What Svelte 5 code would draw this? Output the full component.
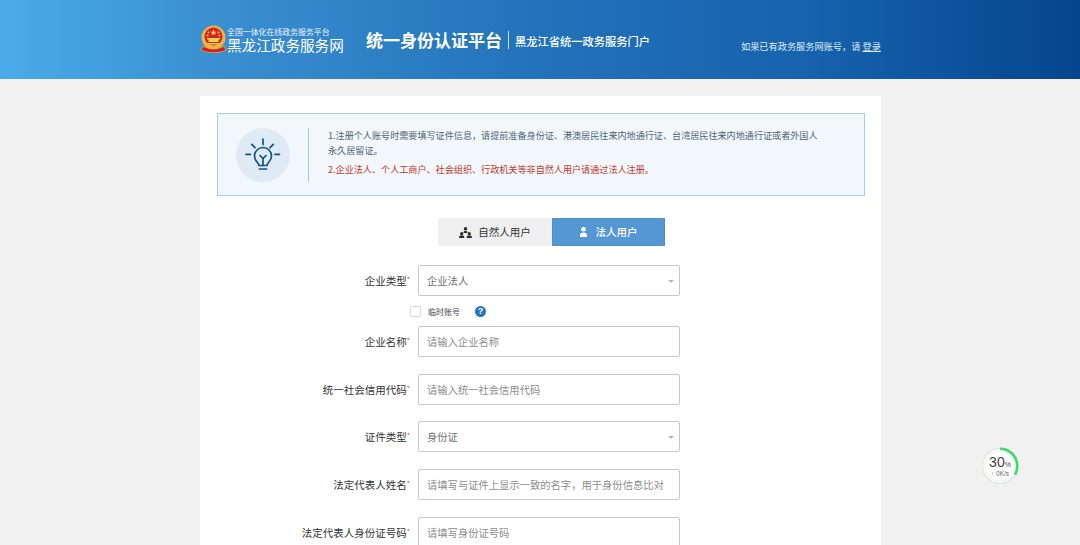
<script>
  const fields = [
    { label: '企业名称', ph: '请输入企业名称' },
    { label: '统一社会信用代码', ph: '请输入统一社会信用代码' },
    { label: '证件类型', value: '身份证', select: true },
    { label: '法定代表人姓名', ph: '请填写与证件上显示一致的名字，用于身份信息比对' },
    { label: '法定代表人身份证号码', ph: '请填写身份证号码' }
  ];
</script>

<div class="page">
  <header class="top">
    <div class="inner">
      <div class="brand">
        <svg class="emblem" width="27" height="28" viewBox="0 0 27 28">
          <path d="M3 21c2 3 19 3 21 0l2 4c-5 3.500-20 3.500-25 0z" fill="#c9212b" stroke="#e8b23a" stroke-width=".8"/>
          <circle cx="13.500" cy="12.500" r="12" fill="#e9b53c"/>
          <circle cx="13.500" cy="11.500" r="9" fill="#d3232a"/>
          <path d="M13.500 4.500l.9 2.200h2.300l-1.800 1.400.7 2.200-2.100-1.300-2.100 1.300.7-2.200-1.800-1.400h2.300z" fill="#f5d04a"/>
          <circle cx="8.500" cy="7.500" r=".9" fill="#f5d04a"/>
          <circle cx="18.500" cy="7.500" r=".9" fill="#f5d04a"/>
          <circle cx="7.500" cy="10.500" r=".9" fill="#f5d04a"/>
          <circle cx="19.500" cy="10.500" r=".9" fill="#f5d04a"/>
          <path d="M7 13h13v1.500H18.500V17h-10v-2.500H7z" fill="#f5d04a"/>
          <rect x="8" y="18" width="11" height="1.500" fill="#f5d04a"/>
        </svg>
        <div class="brandtext">
          <div class="b1">全国一体化在线政务服务平台</div>
          <div class="b2">黑龙江政务服务网</div>
        </div>
      </div>
      <div class="title">统一身份认证平台</div>
      <div class="sub">黑龙江省统一政务服务门户</div>
      <div class="login">如果已有政务服务网账号，请 <span>登录</span></div>
    </div>
  </header>

  <main class="card">
    <section class="notice">
      <div class="bulb">
        <svg width="36" height="38" viewBox="0 0 36 38" fill="none" stroke="#14508f" stroke-width="1.700" stroke-linecap="round">
          <path d="M18 3v5.500M6.700 8.300l3.300 3.400M28.300 8.300L25 11.700M1 18.300h4.500M30 18.300h4.500"/>
          <path d="M14 29.500c0-3-4.500-4-4.500-9.500a8.500 8.500 0 0 1 17 0c0 5.500-4.500 6.500-4.500 9.500z"/>
          <path d="M15 19.500l3 3 3-3M18 22.500v7M14.500 33h7"/>
        </svg>
      </div>
      <div class="ntext">
        <p class="n1">1.注册个人账号时需要填写证件信息，请提前准备身份证、港澳居民往来内地通行证、台湾居民往来内地通行证或者外国人永久居留证。</p>
        <p class="n2">2.企业法人、个人工商户、社会组织、行政机关等非自然人用户请通过法人注册。</p>
      </div>
    </section>

    <div class="tabs">
      <div class="tab">
        <svg width="13" height="11" viewBox="0 0 13 11" fill="#2b2b2b"><circle cx="6.500" cy="1.700" r="1.700"/><path d="M4.500 6c0-1.600.8-2.300 2-2.300s2 .7 2 2.300z"/><circle cx="2.700" cy="6.700" r="1.600"/><circle cx="10.300" cy="6.700" r="1.600"/><path d="M0 11c0-2 1-2.700 2.700-2.700S5.400 9 5.400 11zM7.600 11c0-2 1-2.700 2.700-2.700S13 9 13 11z"/></svg>
        <span>自然人用户</span>
      </div>
      <div class="tab active">
        <svg width="7" height="10" viewBox="0 0 7 10" fill="#fff"><circle cx="3.500" cy="2.300" r="2.300"/><path d="M0 10V8c0-1.700 1.500-2.600 3.500-2.600S7 6.300 7 8v2z"/></svg>
        <span>法人用户</span>
      </div>
    </div>

    <form class="form">
      <div class="row first">
        <div class="label">企业类型<i>*</i></div>
        <div class="input select val">企业法人</div>
      </div>
      <div class="temp">
        <span class="check"></span>
        <span class="temptext">临时账号</span>
        <span class="q">?</span>
      </div>
      {#each fields as f}
        <div class="row">
          <div class="label">{f.label}<i>*</i></div>
          <div class="input" class:select={f.select} class:val={f.value}>{f.value ?? f.ph}</div>
        </div>
      {/each}
    </form>
  </main>

  <div class="speed">
    <svg width="38" height="38" viewBox="0 0 38 38">
      <circle cx="19" cy="19" r="17.500" fill="#fff" stroke="#e6e6e6" stroke-width="1.500"/>
      <circle cx="19" cy="19" r="15" fill="none" stroke="#e2f6e6" stroke-width="1.200"/>
      <circle cx="19" cy="19" r="17.300" fill="none" stroke="#3ddc6a" stroke-width="2.600" stroke-dasharray="36 109" transform="rotate(-90 19 19)"/>
    </svg>
    <div class="pct">30<small>%</small></div>
    <div class="rate"><b>↑</b> 0K/s</div>
  </div>
</div>

<style>
  :global(body) {
    margin: 0;
    background: #f1f1f1;
  }
  .page {
    height: 545px;
    overflow: hidden;
    position: relative;
    font-family: "Noto Sans CJK SC", "Liberation Sans", sans-serif;
    background: #f1f1f1;
  }
  .top {
    height: 79px;
    background: linear-gradient(90deg, #4aace8 0%, #3a8fd0 20%, #2272ba 50%, #1762ac 75%, #05458f 100%);
  }
  .inner {
    width: 681px;
    margin-left: 200px;
    height: 79px;
    display: flex;
    align-items: center;
    color: #fff;
    position: relative;
  }
  .brand {
    display: flex;
    align-items: center;
    width: 166px;
  }
  .emblem {
    flex: none;
    margin-top: -1px;
  }
  .brandtext {
    line-height: 1;
  }
  .b1 {
    font-size: 7.900px;
    line-height: 11px;
    white-space: nowrap;
    color: #e8f2fb;
  }
  .b2 {
    font-size: 14.600px;
    line-height: 16px;
    white-space: nowrap;
  }
  .title {
    font-size: 17px;
    font-weight: 700;
    white-space: nowrap;
    width: 142px;
  }
  .sub {
    font-size: 11.250px;
    font-weight: 500;
    border-left: 1px solid #cfe3f5;
    padding-left: 6px;
    height: 18px;
    line-height: 20px;
    white-space: nowrap;
  }
  .login {
    position: absolute;
    left: 541px;
    top: 40px;
    font-size: 9.200px;
    line-height: 13px;
    color: #dcebf8;
    white-space: nowrap;
  }
  .login span {
    text-decoration: underline;
  }
  .card {
    width: 648px;
    height: 449px;
    margin: 17px 0 0 200px;
    padding: 17px 16px 0 17px;
    background: #fff;
  }
  .notice {
    height: 81px;
    background: #f2f7fc;
    border: 1px solid #a6cdec;
    display: flex;
    align-items: center;
    color: #4f6379;
  }
  .bulb {
    width: 54px;
    height: 54px;
    border-radius: 50%;
    background: #deeaf4;
    margin-left: 18px;
    display: flex;
    align-items: center;
    justify-content: center;
    flex: none;
  }
  .ntext {
    margin-left: 18px;
    height: 54px;
    border-left: 1px solid #9cc5e6;
    padding-left: 19px;
    width: 492px;
    font-size: 9.100px;
    line-height: 15px;
  }
  .ntext p {
    margin: 0;
  }
  .n2 {
    color: #c0392b;
    margin-top: 4px !important;
  }
  .tabs {
    display: flex;
    margin: 22px 0 0 221px;
    height: 28px;
  }
  .tab {
    width: 114px;
    background: #f0f0f0;
    color: #333;
    display: flex;
    align-items: center;
    justify-content: center;
    gap: 6px;
    font-size: 10.500px;
  }
  .tab span {
    line-height: 26px;
  }
  .tab.active {
    width: 113px;
    gap: 9px;
    background: #5597d3;
    color: #fff;
    font-weight: 500;
    border: 1px solid #4f90cc;
    box-sizing: border-box;
  }
  .form {
    margin-top: 19px;
  }
  .row {
    display: flex;
    align-items: center;
    height: 31px;
    margin-bottom: 16.600px;
  }
  .row.first {
    margin-bottom: 0;
  }
  .label {
    width: 193px;
    margin-right: 8px;
    text-align: right;
    font-size: 10.500px;
    color: #333;
    white-space: nowrap;
  }
  .label i {
    color: #d33;
    font-size: 7px;
    font-style: normal;
    vertical-align: 3px;
  }
  .input {
    width: 262px;
    height: 31px;
    box-sizing: border-box;
    border: 1px solid #c8c8c8;
    border-radius: 2px;
    background: #fff;
    padding-left: 8px;
    font-size: 10.300px;
    line-height: 29px;
    color: #8c8c8c;
    position: relative;
    white-space: nowrap;
    overflow: hidden;
  }
  .select::after {
    content: "";
    position: absolute;
    right: 5px;
    top: 14px;
    border: 3px solid transparent;
    border-top: 3px solid #b5b5b5;
    border-bottom: 0;
  }
  .val {
    color: #707070;
  }
  .temp {
    display: flex;
    align-items: center;
    height: 30.200px;
    margin-left: 193px;
  }
  .check {
    width: 9px;
    height: 9px;
    border: 1px solid #d9d9d9;
    border-radius: 1px;
  }
  .temptext {
    margin-left: 7px;
    font-size: 8px;
    color: #444;
  }
  .q {
    margin-left: 15px;
    width: 11px;
    height: 11px;
    border-radius: 50%;
    background: #2277bb;
    color: #fff;
    font: 700 9px/11px "Liberation Sans", sans-serif;
    text-align: center;
  }
  .speed {
    position: absolute;
    left: 981px;
    top: 447px;
    width: 38px;
    height: 38px;
    color: #444;
    text-align: center;
  }
  .speed svg {
    position: absolute;
    left: 0;
    top: 0;
  }
  .pct {
    position: absolute;
    left: 0;
    right: 0;
    top: 7px;
    font: 14px/16px "Liberation Sans", sans-serif;
  }
  .pct small {
    font-size: 7px;
  }
  .rate {
    position: absolute;
    left: 0;
    right: 0;
    top: 23px;
    font: 6.500px/8px "Liberation Sans", sans-serif;
    color: #666;
  }
  .rate b {
    color: #3aa0e8;
  }
</style>
